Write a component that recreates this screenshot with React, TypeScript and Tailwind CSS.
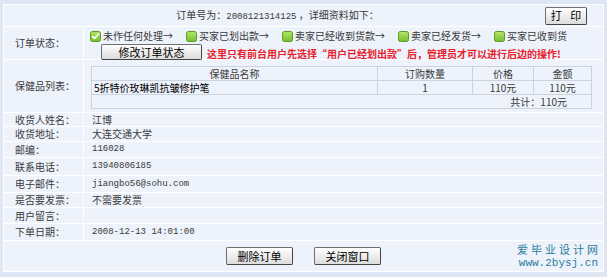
import React from "react";

const cjk = "font-['Noto_Sans_CJK_SC','Noto_Sans',sans-serif]";
const mono = "font-['Liberation_Mono',monospace] text-[9px]";

const Box = ({ checked }: { checked?: boolean }) => (
  <svg width="11" height="11" viewBox="0 0 11 11" className="shrink-0">
    <defs>
      <linearGradient id="gbox" x1="0" y1="0" x2="0" y2="1">
        <stop offset="0" stopColor="#b4e46a" />
        <stop offset="1" stopColor="#76bf2e" />
      </linearGradient>
    </defs>
    <rect x="0.5" y="0.5" width="10" height="10" rx="2" fill="url(#gbox)" stroke="#5a9a22" />
    {checked && (
      <path d="M2.5 5.5l2 2 4-4.5" fill="none" stroke="#fff" strokeWidth="1.6" strokeLinecap="round" strokeLinejoin="round" />
    )}
  </svg>
);

const Btn = ({ children, className = "" }: { children: React.ReactNode; className?: string }) => (
  <button
    className={`flex items-center justify-center text-[11px] text-black leading-none border border-[#6f6f6f] border-b-[#444] border-r-[#444] rounded-[2px] bg-gradient-to-b from-white to-[#dcdcdc] ${className}`}
  >
    {children}
  </button>
);

const statuses = [
  { text: "未作任何处理→", checked: true },
  { text: "买家已划出款→" },
  { text: "卖家已经收到货款→" },
  { text: "卖家已经发货→" },
  { text: "买家已收到货" },
];

const info: { label: string; value: React.ReactNode; h: string }[] = [
  { label: "收货人姓名：", value: "江博", h: "h-[14px]" },
  { label: "收货地址：", value: "大连交通大学", h: "h-[15px]" },
  { label: "邮编：", value: <span className={mono}>116028</span>, h: "h-[16px]" },
  { label: "联系电话：", value: <span className={mono}>13940806185</span>, h: "h-[18px]" },
  { label: "电子邮件：", value: <span className={mono}>jiangbo56@sohu.com</span>, h: "h-[17px]" },
  { label: "是否要发票：", value: "不需要发票", h: "h-[15px]" },
  { label: "用户留言：", value: "", h: "h-[16px]" },
  { label: "下单日期：", value: <span className={mono}>2008-12-13 14:01:00</span>, h: "h-[17px]" },
];

const Label = ({ children }: { children: React.ReactNode }) => (
  <div className="w-[80px] shrink-0 pl-[11px] flex items-center border-r border-white">{children}</div>
);

const cell = "border border-[#cbd3de]";

export default function App() {
  return (
    <div className={`w-[607px] h-[277px] bg-[#dfe7f4] pt-[4px] px-[3px] ${cjk} text-[10px] text-[#3a3a3a] leading-none`}>
      <div className="border border-white bg-[#edf2fb]">
        {/* order number */}
        <div className="h-[22px] flex items-center border-b border-white">
          <div className="flex-1 text-center pl-[6px]">
            订单号为：<span className={mono}>2008121314125</span> ，详细资料如下：
          </div>
          <Btn className="w-[42px] h-[18px] mr-[16px] tracking-[3px] pl-[3px]">打 印</Btn>
        </div>

        {/* status */}
        <div className="h-[33px] flex border-b border-white">
          <Label>订单状态：</Label>
          <div className="flex-1 pl-[6px] pt-[3px]">
            <div className="flex items-center h-[12px] gap-[13px]">
              {statuses.map((s) => (
                <div key={s.text} className="flex items-center gap-[2px]">
                  <Box checked={s.checked} />
                  <span>{s.text}</span>
                </div>
              ))}
            </div>
            <div className="flex items-center mt-[2px]">
              <Btn className="w-[101px] h-[16px] ml-[11px]">修改订单状态</Btn>
              <span className="ml-[5px] mt-[3px] text-[#e8202c] font-semibold">
                这里只有前台用户先选择“用户已经划出款”后，管理员才可以进行后边的操作!
              </span>
            </div>
          </div>
        </div>

        {/* product list */}
        <div className="h-[53px] flex border-b border-white">
          <Label>保健品列表：</Label>
          <div className="flex-1 pl-[7px] pt-[6px]">
            <table className="w-[501px] border-collapse border border-[#bcc6d3]">
              <tbody>
                <tr className="h-[14px]">
                  <td className={`w-[286px] ${cell} text-center`}>保健品名称</td>
                  <td className={`w-[95px] ${cell} text-center`}>订购数量</td>
                  <td className={`w-[61px] ${cell} text-center`}>价格</td>
                  <td className={`${cell} text-center`}>金额</td>
                </tr>
                <tr className="h-[14px]">
                  <td className={`${cell} pl-[2px] text-black`}>5折特价玫琳凯抗皱修护笔</td>
                  <td className={`${cell} text-center`}>1</td>
                  <td className={`${cell} text-center`}>110元</td>
                  <td className={`${cell} text-center`}>110元</td>
                </tr>
                <tr className="h-[14px]">
                  <td colSpan={4} className={`${cell} text-right pr-[24px]`}>
                    共计：110元
                  </td>
                </tr>
              </tbody>
            </table>
          </div>
        </div>

        {/* info rows */}
        {info.map((r) => (
          <div key={r.label} className={`${r.h} flex border-b border-white`}>
            <Label>{r.label}</Label>
            <div className="flex-1 pl-[8px] flex items-center">{r.value}</div>
          </div>
        ))}

        {/* actions */}
        <div className="relative h-[30px] flex items-center justify-center gap-[21px]">
          <Btn className="w-[67px] h-[18px]">删除订单</Btn>
          <Btn className="w-[67px] h-[18px]">关闭窗口</Btn>
          <div className="absolute right-[5px] top-[3px] text-right text-[#2b7c9c]">
            <div className="text-[11px] tracking-[3px] mr-[-3px]">爱毕业设计网</div>
            <div className="font-['Liberation_Mono',monospace] text-[11px] mt-[3px]">www.2bysj.cn</div>
          </div>
        </div>
      </div>
    </div>
  );
}
